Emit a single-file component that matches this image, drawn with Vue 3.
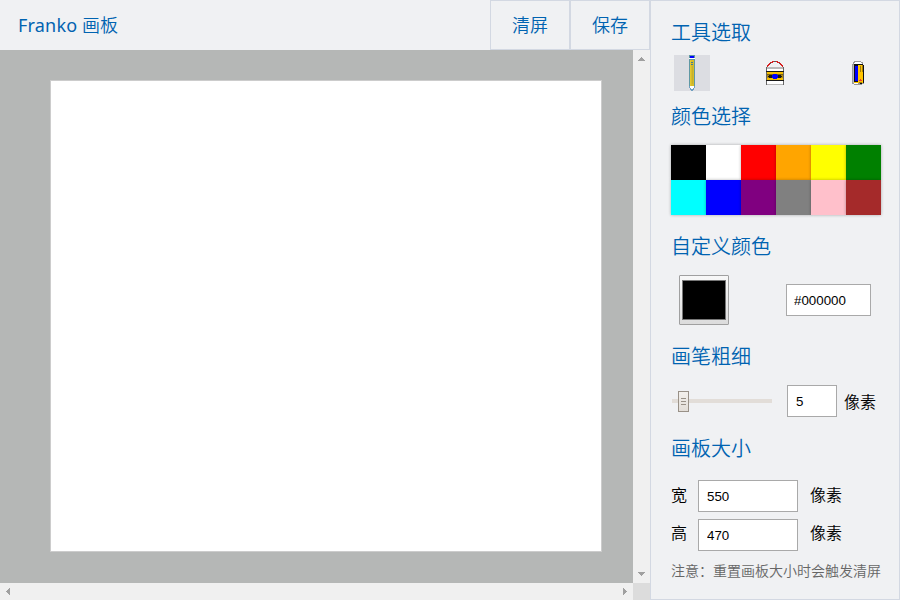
<script setup>
import { ref } from 'vue'

const colors = ['black', 'white', 'red', 'orange', 'yellow', 'green', 'cyan', 'blue', 'purple', 'gray', 'pink', 'brown']
const color = ref('#000000')
const size = ref(5)
const width = ref(550)
const height = ref(470)
const tool = ref('pencil')
</script>

<template>
  <div class="app">
    <main class="main">
      <header class="header">
        <h1 class="title"><span class="latin">Franko</span> 画板</h1>
        <button class="action">清屏</button>
        <button class="action">保存</button>
      </header>
      <div class="workspace">
        <div class="viewport"><div class="canvas"></div></div>
        <div class="vbar">
          <svg width="17" height="17"><path d="M8 7h1v1h1v1h1v1h1v1H5v-1h1V9h1V8h1z" /></svg>
          <svg width="17" height="17"><path d="M5 6h7v1h-1v1h-1v1H9v1H8V9H7V8H6V7H5z" /></svg>
        </div>
        <div class="hbar">
          <svg width="17" height="17"><path d="M10 5v7H9v-1H8v-1H7V9H6V8h1V7h1V6h1V5z" /></svg>
          <svg width="17" height="17"><path d="M7 5v7h1v-1h1v-1h1V9h1V8h-1V7H9V6H8V5z" /></svg>
        </div>
        <div class="corner"></div>
      </div>
    </main>

    <aside class="panel">
      <h2>工具选取</h2>
      <div class="tools">
        <button class="tool" :class="{ active: tool === 'pencil' }" @click="tool = 'pencil'">
          <svg width="36" height="36" shape-rendering="crispEdges">
            <path fill="#5f98a4" d="M15 0h6v31h-1v2h-1v3h-2v-3h-1v-2h-1z" />
            <path fill="#6f9fc0" d="M15 31h6v2h-1v2h-1v1h-2v-1h-1v-2h-1z" />
            <path fill="#00f" d="M16 1h4v2h-4z" />
            <path fill="#fff" d="M15 3h6v1h-6zM16 31h4v2h-1v1h-2v-1h-1z" />
            <path fill="#d8bd27" d="M16 5h4v26h-4z" />
            <path fill="#c4b030" d="M18 11h1v18h-1z" />
            <path fill="#e3c832" d="M16 5h1v26h-1z" />
            <path fill="#3f7999" d="M17 7h2v1h-2zM17 9h2v1h-2z" />
          </svg>
        </button>
        <button class="tool" :class="{ active: tool === 'bucket' }" @click="tool = 'bucket'">
          <svg width="36" height="36" shape-rendering="crispEdges">
            <path fill="#666" d="M9 12h1v18H9zM26 12h1v18h-1z" />
            <path fill="#d52020" d="M15 6h6v1h2v1h1v1h1v1h1v3h-1v-2h-1v-1h-1V9h-1V8h-2V7h-4v1h-2v1h-1v1h-1v1h-1v2h-1v-3h1V9h1V8h1V7h2z" />
            <path fill="#555" d="M17 6h2v1h-2zM13 8h1v1h-1zM22 8h1v1h-1zM10 12h1v1h-1zM25 12h1v1h-1z" />
            <path fill="#b9b9b9" d="M10 12h16v2H10zM10 29h16v1H10z" />
            <path fill="#fff" d="M10 14h16v2H10zM10 26h16v3H10z" />
            <path fill="#181818" d="M9 16h18v1H9zM9 25h18v1H9z" />
            <path fill="#f5bd00" d="M10 17h16v8H10z" />
            <path fill="#776018" d="M10 19h16v1H10z" />
            <path fill="#b08a10" d="M10 20h16v3H10z" />
            <path fill="#161616" d="M12 20h12v1h1v1h-1v1H12v-1h-1v-1h1z" />
            <path fill="#00f" d="M16 19h4v1h1v3h-1v1h-4v-1h-1v-3h1z" />
          </svg>
        </button>
        <button class="tool" :class="{ active: tool === 'eraser' }" @click="tool = 'eraser'">
          <svg width="36" height="36" shape-rendering="crispEdges">
            <path fill="#999" d="M14 6h7v1h2v3h1v19h-2v1h-8v-1h-2V9h1V7h1z" />
            <path fill="#fff" d="M15 7h6v1h1v1h-8V8h1zM14 28h4v1h-4z" />
            <path fill="#bbb" d="M13 10h1v18h-1z" />
            <path fill="#111" d="M14 9h9v1h1v18h-2v1h-2v-1h-6z" />
            <path fill="#ffc400" d="M14 10h9v18h-9z" />
            <path fill="#111" d="M14 10h4v17h-4z" />
            <path fill="#00f" d="M15 11h3v15h-3z" />
            <path fill="#a07c10" d="M20 11h1v6h-1zM22 10h1v7h-1zM19 27h3v1h-3z" />
            <path fill="#e33" d="M20 24h1v1h1v1h-3v-1h1z" />
          </svg>
        </button>
      </div>

      <h2>颜色选择</h2>
      <div class="palette">
        <button v-for="c in colors" :key="c" class="swatch" :style="{ background: c }"></button>
      </div>

      <h2>自定义颜色</h2>
      <div class="custom">
        <button class="well"><span class="chip" :style="{ background: color }"></span></button>
        <input v-model="color" class="field hex" type="text">
      </div>

      <h2>画笔粗细</h2>
      <div class="brush">
        <div class="slider">
          <span class="track"></span>
          <span class="thumb"><i></i><i></i><i></i></span>
        </div>
        <input v-model="size" class="field size" type="text">
        <span>像素</span>
      </div>

      <h2>画板大小</h2>
      <div class="dimensions">
        <label class="dimension"><span>宽</span><input v-model="width" class="field" type="text"><span>像素</span></label>
        <label class="dimension"><span>高</span><input v-model="height" class="field" type="text"><span>像素</span></label>
      </div>
      <p class="note">注意：重置画板大小时会触发清屏</p>
    </aside>
  </div>
</template>

<style>
body {
  margin: 0;
  overflow: hidden;
}
</style>

<style scoped>
* {
  box-sizing: border-box;
}

.app {
  display: grid;
  grid-template-columns: 650px 250px;
  width: 900px;
  height: 600px;
  background: #f0f1f3;
  font-family: "Noto Sans", "Noto Sans CJK SC", sans-serif;
  font-size: 16px;
  font-weight: 350;
  color: #000;
}

button {
  padding: 0;
  border: 0;
  background: none;
  font: inherit;
}

svg {
  display: block;
}

.main {
  display: grid;
  grid-template-rows: 50px 550px;
}

.header {
  display: flex;
  padding-left: 18px;
}

.title {
  flex: 1;
  margin: 0;
  font-size: 18px;
  font-weight: 350;
  line-height: 51px;
  color: #0063b1;
}

.latin {
  font-weight: 400;
  letter-spacing: 0.2px;
}

.action {
  width: 80px;
  border: 1px solid #d3d8e2;
  font-size: 18px;
  line-height: 48px;
  color: #0063b1;
}

.workspace {
  display: grid;
  grid-template-columns: 633px 17px;
  grid-template-rows: 533px 17px;
}

.viewport {
  padding: 30px 0 0 50px;
  background: #b5b7b6;
}

.canvas {
  width: 552px;
  height: 472px;
  border: 1px solid #ccc;
  background: #fff;
}

.vbar,
.hbar {
  display: flex;
  justify-content: space-between;
  background: #f0f0f0;
}

.vbar {
  flex-direction: column;
}

.vbar path,
.hbar path {
  fill: #a0a0a0;
}

.corner {
  background: #dcdcdc;
}

.panel {
  padding: 16px 0 0 20px;
  border: 1px solid #d3d8e2;
}

h2 {
  height: 30px;
  margin: 0;
  font-size: 20px;
  font-weight: 350;
  line-height: 32px;
  color: #0063b1;
}

.tools {
  display: flex;
  gap: 47px;
  height: 54px;
  padding: 8px 0 0 3px;
}

.tool {
  width: 36px;
  height: 36px;
}

.tool.active {
  background: #dcdde2;
}

.palette {
  display: grid;
  grid-template-columns: repeat(6, 35px);
  grid-template-rows: repeat(2, 35px);
  height: 100px;
  padding-top: 14px;
}

.swatch {
  box-shadow: 0 0 3px rgba(0, 0, 0, 0.3);
}

.custom {
  display: flex;
  justify-content: space-between;
  height: 80px;
  padding: 14px 28px 0 8px;
}

.well {
  width: 50px;
  height: 50px;
  padding: 4px 2px;
  border: 1px solid #a0a0a0;
  border-radius: 1px;
  background: linear-gradient(#f8f8f8, #dcdcdc);
}

.chip {
  display: block;
  height: 40px;
  border: 1px solid #777;
}

.field {
  width: 100px;
  height: 32px;
  padding: 0 8px;
  border: 1px solid #a9a9a9;
  border-radius: 0;
  background: #fff;
  color: #000;
  font: 13.33px "Liberation Sans", sans-serif;
}

.hex {
  width: 85px;
  margin-top: 9px;
  padding: 0 7px;
}

.brush {
  display: flex;
  height: 62px;
  padding: 14px 0 0 1px;
  line-height: 34px;
}

.slider {
  display: grid;
  align-items: center;
  width: 100px;
  height: 32px;
  margin-right: 15px;
}

.track,
.thumb {
  grid-area: 1 / 1;
}

.track {
  height: 4px;
  background: #e2ddd8;
}

.thumb {
  display: flex;
  flex-direction: column;
  justify-content: center;
  gap: 2px;
  width: 11px;
  height: 21px;
  margin-left: 6px;
  padding: 0 2px;
  border: 1px solid #999187;
  background: linear-gradient(#f3f0ec, #e3ded8);
}

.thumb i {
  height: 1px;
  background: #999187;
}

.size {
  width: 50px;
  margin-right: 7px;
}

.dimensions {
  display: grid;
  gap: 7px;
  padding-top: 17px;
}

.dimension {
  display: grid;
  grid-template-columns: 27px 112px auto;
  line-height: 30px;
}

.dimension:last-child {
  line-height: 29px;
}

.note {
  margin: 8px 0 0;
  font-size: 14px;
  line-height: 24px;
  color: #666;
}
</style>
